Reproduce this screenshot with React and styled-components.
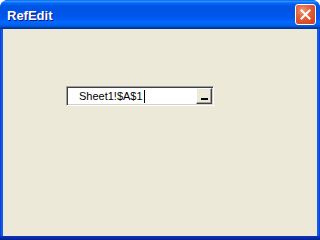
import React from "react";
import styled, { createGlobalStyle } from "styled-components";

const Global = createGlobalStyle`
  html, body { margin: 0; padding: 0; width: 320px; height: 240px; overflow: hidden; background: #ffffff; }
  #root { width: 320px; height: 240px; }
`;

const Window = styled.div`
  width: 320px;
  height: 240px;
  box-sizing: border-box;
  display: flex;
  flex-direction: column;
  border-radius: 8px 8px 0 0;
  overflow: hidden;
  background:
    linear-gradient(to bottom, transparent 236px, #0b35c0 236px, #0a2ca6 238px, #001f8c 240px),
    linear-gradient(to right, #0831d9 0px, #166aee 2px, #0a50e0 3px, #0a50e0 317px, #166aee 318px, #0831d9 320px);
`;

const TitleBar = styled.div`
  height: 29px;
  flex: none;
  display: flex;
  align-items: center;
  justify-content: space-between;
  padding: 2px 4px 0 7px;
  box-sizing: border-box;
  background: linear-gradient(
    to bottom,
    #0058ee 0%, #3593ff 4%, #288eff 6%, #127dff 8%, #036ffc 10%,
    #0262ee 14%, #0057e5 20%, #0054e3 24%, #0055eb 56%, #005bf5 66%,
    #026afe 76%, #0062ef 86%, #0052d6 92%, #0040ab 94%, #003092 100%
  );
`;

const TitleText = styled.span`
  font-family: "Liberation Sans", Arial, sans-serif;
  font-weight: bold;
  font-size: 13px;
  color: #ffffff;
  text-shadow: 1px 1px #0f1089;
`;

const CloseButton = styled.div`
  width: 21px;
  height: 21px;
  margin-top: -2px;
  box-sizing: border-box;
  border: 1px solid #ffffff;
  border-radius: 3px;
  display: flex;
  align-items: center;
  justify-content: center;
  background: radial-gradient(circle at 35% 30%, #f29a7c 0%, #e4643f 35%, #d94d28 70%, #c53e1c 100%);
`;

const Body = styled.div`
  flex: 1;
  margin: 0 3px 4px 3px;
  background: #ece9d8;
  padding: 57px 0 0 63px;
  box-sizing: border-box;
`;

const RefField = styled.div`
  width: 148px;
  height: 20px;
  box-sizing: border-box;
  display: flex;
  background: #ffffff;
  border: 1px solid;
  border-color: #a0a0a0 #ffffff #ffffff #a0a0a0;
  box-shadow: inset 1px 1px #404040, inset -1px -1px #d4d0c8;
  padding: 1px;
`;

const FieldText = styled.div`
  flex: 1;
  display: flex;
  align-items: center;
  padding-left: 11px;
  font-family: "Liberation Sans", Arial, sans-serif;
  font-size: 11px;
  line-height: 16px;
  color: #000000;
`;

const Caret = styled.span`
  display: inline-block;
  width: 1px;
  height: 13px;
  margin-left: 1px;
  background: #000000;
`;

const CollapseButton = styled.div`
  width: 16px;
  height: 16px;
  box-sizing: border-box;
  background: #ece9d8;
  border: 1px solid;
  border-color: #ffffff #404040 #404040 #ffffff;
  box-shadow: inset -1px -1px #a0a0a0;
  display: flex;
  align-items: flex-end;
  justify-content: center;
  padding-bottom: 3px;
`;

const Bar = styled.span`
  display: block;
  width: 7px;
  height: 2px;
  background: #000000;
`;

export default function App() {
  return (
    <>
      <Global />
      <Window>
        <TitleBar>
          <TitleText>RefEdit</TitleText>
          <CloseButton>
            <svg width="11" height="11" viewBox="0 0 11 11">
              <path d="M1.5 1.5 L9.5 9.5 M9.5 1.5 L1.5 9.5" stroke="#ffffff" strokeWidth="2" strokeLinecap="square" fill="none" />
            </svg>
          </CloseButton>
        </TitleBar>
        <Body>
          <RefField>
            <FieldText>
              Sheet1!$A$1<Caret />
            </FieldText>
            <CollapseButton>
              <Bar />
            </CollapseButton>
          </RefField>
        </Body>
      </Window>
    </>
  );
}
